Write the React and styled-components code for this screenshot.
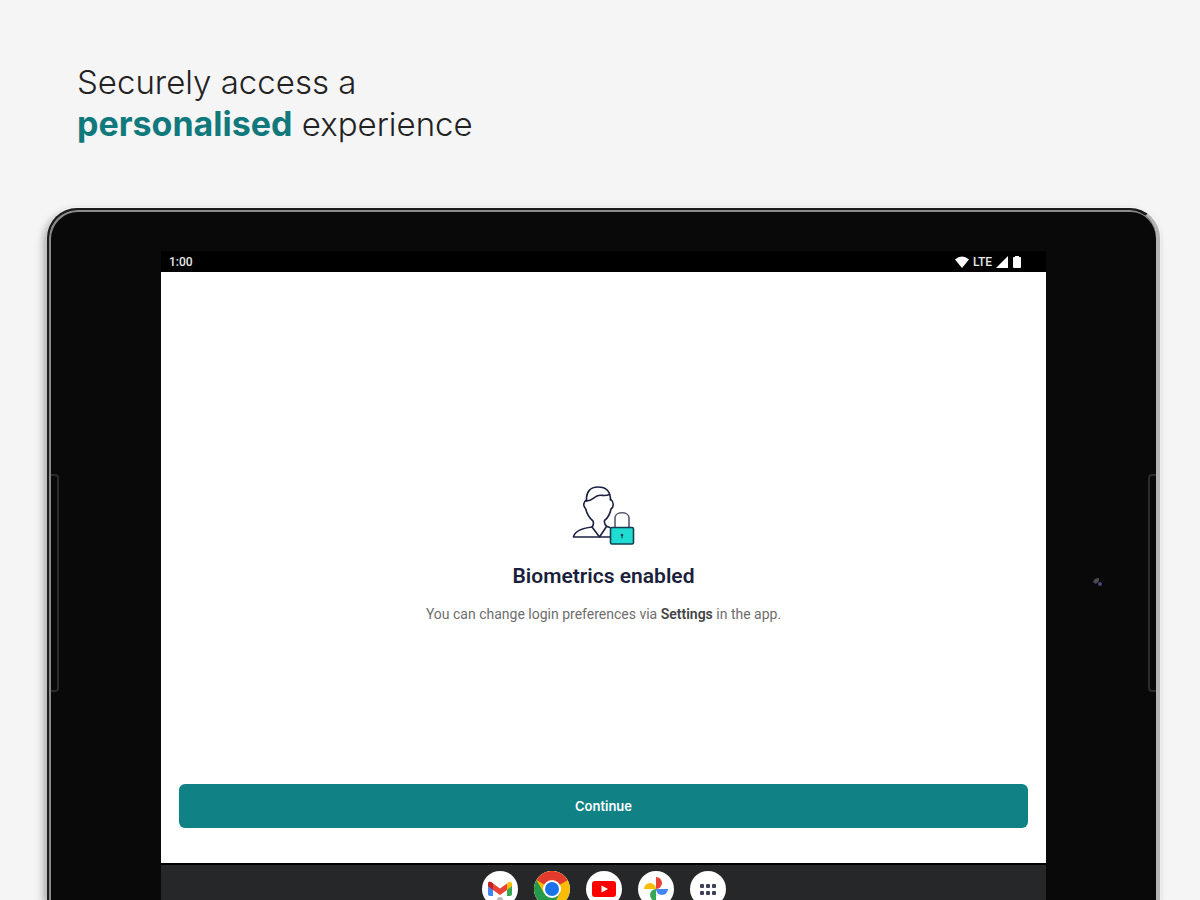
import React from 'react';
import styled, { createGlobalStyle } from 'styled-components';

export default function App() {
    return (
        <>
            <GlobalStyle />
            <Page>
                <Headline>
                    Securely access a<br />
                    <strong>personalised</strong> experience
                </Headline>
                <Tablet>
                    <Bezel>
                        <SideKey $side="left" />
                    </Bezel>
                    <Screen>
                        <StatusBar>
                            <span>1:00</span>
                            <StatusIcons />
                        </StatusBar>
                        <Content>
                            <Message>
                                <LockedUser />
                                <h2>Biometrics enabled</h2>
                                <p>You can change login preferences via <b>Settings</b> in the app.</p>
                            </Message>
                            <Continue type="button">Continue</Continue>
                        </Content>
                        <Dock>
                            <DockApp type="button" aria-label="Gmail"><Gmail /></DockApp>
                            <DockApp type="button" aria-label="Chrome"><Chrome /></DockApp>
                            <DockApp type="button" aria-label="YouTube"><YouTube /></DockApp>
                            <DockApp type="button" aria-label="Photos"><Photos /></DockApp>
                            <DockApp type="button" aria-label="All apps"><AllApps /></DockApp>
                        </Dock>
                    </Screen>
                    <Bezel>
                        <Camera viewBox="0 0 12 12">
                            <path d="M1 6 Q2 2 7 2 L7 5 L4 8 Z" fill="#4a4a50" />
                            <circle cx="8" cy="8" r="2" fill="#4a4585" />
                        </Camera>
                        <SideKey $side="right" />
                    </Bezel>
                </Tablet>
            </Page>
        </>
    )
}

function StatusIcons() {
    return (
        <Signals>
            <svg width="14" height="12" viewBox="0 0 14 12">
                <path d="M0 3.5 Q7 -2.5 14 3.5 L7 12 Z" fill="#fff" />
            </svg>
            <span>LTE</span>
            <svg width="12" height="12" viewBox="0 0 12 12">
                <path d="M12 0 V12 H0 Z" fill="#fff" />
            </svg>
            <svg width="10" height="12" viewBox="0 0 10 12">
                <path d="M1 2 Q1 1 2 1 H3 V0 H7 V1 H8 Q9 1 9 2 V11 Q9 12 8 12 H2 Q1 12 1 11 Z" fill="#fff" />
            </svg>
        </Signals>
    )
}

function LockedUser() {
    return (
        <svg width="68" height="62" viewBox="20 13 68 62" fill="none" stroke="#1d2140" strokeWidth="1.6" strokeLinejoin="round" strokeLinecap="round">
            <path d="M36.5 30 C36 21 40 16 48 16 C56 16 60.500 20 60.500 29" />
            <path d="M36.5 30 C42 30 43 27 47 25 C51 23 54 26 59.500 23.500" />
            <path d="M36.5 29 C33 31 33 35 35.500 37.500 C37 43 39 47 43 50 C44 53 43 55 42 56 C34 57 25 59 23.500 66 H60" />
            <path d="M60.500 28 C64 31 64 36 61 38 C60 43 58 47 54.500 49.500 C54 52 55 54 57 55.500 L60 56.500" />
            <path d="M42 56 L49.500 66 L56.500 55.500" />
            <path d="M65 56 V47 C65 40 79 40 79 47 V56" stroke="#555a70" />
            <rect x="60.500" y="56.500" width="23" height="16.500" rx="1.500" fill="#1fdcd2" stroke="#153f4c" />
            <circle cx="72" cy="64" r="1.300" fill="#153f4c" stroke="none" />
            <path d="M72 64 V67" stroke="#153f4c" strokeWidth="1" />
        </svg>
    )
}

function Gmail() {
    return (
        <svg viewBox="0 0 36 36">
            <path d="M6 13 L11 16 V25 H8 Q6 25 6 23 Z" fill="#4285f4" />
            <path d="M25 16 L30 13 V23 Q30 25 28 25 H25 Z" fill="#34a853" />
            <path d="M25 12.500 L27 11 Q30 10 30 13 V15 L25 19 Z" fill="#fbbc04" />
            <path d="M6 15 V13 Q6 10 9 11 L18 17.500 L25 12.500 V19 L18 24 L11 19 Z" fill="#ea4335" />
            <path d="M6 15 V13 Q6 10 9 11 L11 12.500 V19 Z" fill="#c5221f" />
            <circle cx="18" cy="29" r="3" fill="#b8b8b8" />
        </svg>
    )
}

function Chrome() {
    return (
        <svg viewBox="0 0 36 36">
            <circle cx="18" cy="18" r="18" fill="#fbbc04" />
            <path d="M18 18 L2.400 9 A18 18 0 0 1 33.600 9 Z" fill="#e33b2e" />
            <path d="M18 9 H33.600 L18 18 Z" fill="#e33b2e" />
            <path d="M18 18 L10.200 22.500 L2.400 9 A18 18 0 0 0 18 36 L25.800 22.500 Z" fill="#23994b" />
            <circle cx="18" cy="18" r="9" fill="#fff" />
            <circle cx="18" cy="18" r="7" fill="#1a73e8" />
        </svg>
    )
}

function YouTube() {
    return (
        <svg viewBox="0 0 36 36">
            <rect x="6" y="10" width="24" height="16" rx="3" fill="#f00" />
            <path d="M15.500 14.500 L22 18 L15.500 21.500 Z" fill="#fff" />
        </svg>
    )
}

function Photos() {
    return (
        <svg viewBox="0 0 36 36">
            <path d="M18 6 A6 6 0 0 1 18 18 Z" fill="#ea4335" />
            <path d="M30 18 A6 6 0 0 1 18 18 Z" fill="#4285f4" />
            <path d="M18 30 A6 6 0 0 1 18 18 Z" fill="#34a853" />
            <path d="M6 18 A6 6 0 0 1 18 18 Z" fill="#fbbc04" />
        </svg>
    )
}

function AllApps() {
    return (
        <svg viewBox="0 0 36 36" fill="#3c4058">
            {[12, 18, 24].map(x => [14, 21].map(y => <rect key={`${x}-${y}`} x={x - 2} y={y - 1} width="4" height="4" rx="1" />))}
        </svg>
    )
}

const GlobalStyle = createGlobalStyle`
    * {
        box-sizing: border-box;
    }
    body {
        margin: 0;
        background: #f5f5f5;
    }
`
const Page = styled.main`
    display: flex;
    flex-direction: column;
    height: 100vh;
    overflow: hidden;
    background: #f5f5f5;
    font-family: Inter, 'Liberation Sans', sans-serif;
`
const Headline = styled.h1`
    margin: 0;
    padding: 61px 77px 63px;
    font-size: 33px;
    line-height: 42px;
    font-weight: 300;
    color: #222222;

    strong {
        font-size: 34px;
        font-weight: 700;
        color: #10797c;
    }
`
const Tablet = styled.section`
    flex: 1;
    min-height: 0;
    display: flex;
    margin: 0 40px 0 47px;
    padding: 2px 0 0 2px;
    border: 2px solid #1c1c1c;
    border-right: 4px solid #b4b4b4;
    border-bottom: none;
    border-radius: 30px 30px 0 0;
    background: #090909;
    box-shadow: inset 1px 1px 0 1px #8a8a8a, -3px 4px 8px rgba(0, 0, 0, 0.35), 0 0 0 1px #ffffff;
`
const Bezel = styled.div`
    flex: none;
    display: flex;
    justify-content: space-between;
    width: 110px;
    padding-top: 262px;
`
const SideKey = styled.div`
    width: 8px;
    height: 218px;
    border: 2px solid #2b2b2b;
    border-radius: ${props => props.$side === "left" ? "0 4px 4px 0" : "4px 0 0 4px"};
    border-${props => props.$side}: none;
`
const Camera = styled.svg`
    width: 12px;
    height: 12px;
    margin: 102px 0 0 46px;
`
const Screen = styled.div`
    flex: 1;
    display: flex;
    flex-direction: column;
    margin-top: 39px;
`
const StatusBar = styled.div`
    display: flex;
    justify-content: space-between;
    align-items: center;
    height: 21px;
    padding: 0 24px 0 8px;
    background: #000000;
    color: #e8e8e8;
    font-family: Roboto, sans-serif;
    font-size: 12px;
    font-weight: 500;
`
const Signals = styled.div`
    display: flex;
    align-items: center;
    gap: 4px;
`
const Content = styled.div`
    flex: 1;
    display: flex;
    flex-direction: column;
    padding: 0 18px 35px;
    background: #ffffff;
`
const Message = styled.div`
    flex: 1;
    display: flex;
    flex-direction: column;
    align-items: center;
    justify-content: center;
    padding-top: 54px;
    text-align: center;

    h2 {
        margin: 16px 0 0;
        font-family: Roboto, sans-serif;
        font-size: 21px;
        line-height: 28px;
        font-weight: 600;
        color: #1b1f3b;
    }
    p {
        margin: 12px 0 0;
        font-family: Roboto, sans-serif;
        font-size: 14px;
        line-height: 24px;
        color: #6e6e6e;
    }
    b {
        font-weight: 600;
        color: #444444;
    }
`
const Continue = styled.button`
    height: 44px;
    border: none;
    border-radius: 6px;
    background: #108286;
    color: #ffffff;
    font-family: inherit;
    font-size: 13px;
    font-weight: 600;
`
const Dock = styled.nav`
    display: flex;
    justify-content: center;
    gap: 16px;
    height: 37px;
    padding-top: 6px;
    border-top: 2px solid #000000;
    background: #262729;
    overflow: hidden;
`
const DockApp = styled.button`
    flex: none;
    width: 36px;
    height: 36px;
    padding: 0;
    border: none;
    border-radius: 50%;
    background: #ffffff;
    overflow: hidden;

    svg {
        display: block;
    }
`
